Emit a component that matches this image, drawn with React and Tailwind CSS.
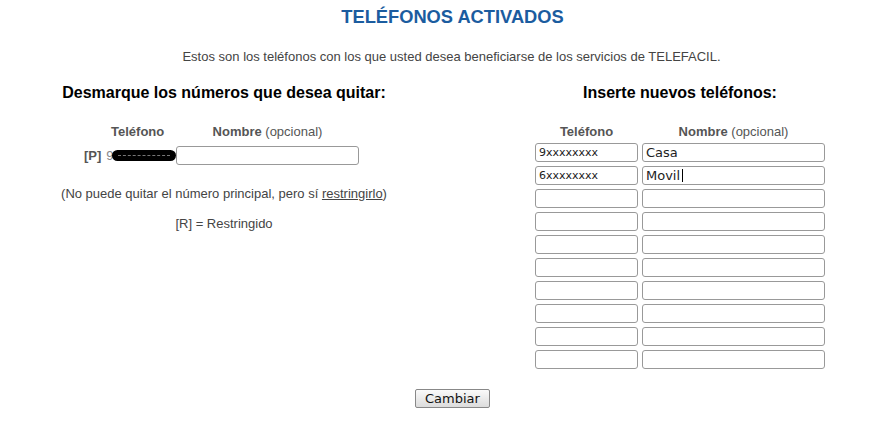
import React from 'react';

const inputCls =
  "block h-[19px] border border-[#999] rounded-[3px] bg-white px-[3px] text-[#222] font-['DejaVu_Sans',sans-serif] outline-none";

const nuevos = [
  { tel: '9xxxxxxxx', nombre: 'Casa' },
  { tel: '6xxxxxxxx', nombre: 'Movil', caret: true },
  { tel: '', nombre: '' },
  { tel: '', nombre: '' },
  { tel: '', nombre: '' },
  { tel: '', nombre: '' },
  { tel: '', nombre: '' },
  { tel: '', nombre: '' },
  { tel: '', nombre: '' },
  { tel: '', nombre: '' },
];

const App = () => {
  return (
    <div className="w-[893px] h-[421px] bg-white text-[#444] font-['Liberation_Sans',Arial,sans-serif] overflow-hidden">
      {/* Titulo */}
      <h1 className="pt-[6px] pl-[12px] text-center text-[18.3px] leading-[22px] font-bold text-[#1b5c9f]">
        TELÉFONOS ACTIVADOS
      </h1>
      <p className="mt-[21px] pl-[10px] text-center text-[13px] leading-[15px]">
        Estos son los teléfonos con los que usted desea beneficiarse de los servicios de TELEFACIL.
      </p>

      <div className="flex mt-[19px]">
        {/* Columna izquierda */}
        <div className="w-[448px] flex flex-col items-center">
          <h2 className="text-[16px] leading-[19px] font-bold text-black">
            Desmarque los números que desea quitar:
          </h2>
          <div className="self-start ml-[84px] mt-[22px]">
            <div className="flex text-[13px] leading-[15px] text-[#555]">
              <div className="w-[92px] pl-[27px] font-bold">Teléfono</div>
              <div className="w-[183px] text-center">
                <span className="font-bold">Nombre</span> (opcional)
              </div>
            </div>
            <div className="flex items-center mt-[7px]">
              <div className="w-[92px] flex items-center text-[13px] text-[#555]">
                <span className="font-bold">[P]</span>
                <span className="ml-[5px] text-[#888]">9</span>
                <span className="ml-[-2px] w-[64px] h-[11px] rounded-full bg-black flex items-center px-[6px]">
                  <span className="w-full border-t border-dashed border-[#777]" />
                </span>
              </div>
              <input className={inputCls + " w-[183px] text-[13px]"} defaultValue="" />
            </div>
          </div>
          <p className="mt-[20px] text-[13px] leading-[15px]">
            (No puede quitar el número principal, pero sí <span className="underline">restringirlo</span>)
          </p>
          <p className="mt-[15px] text-[13px] leading-[15px]">[R] = Restringido</p>
        </div>

        {/* Columna derecha */}
        <div className="flex-1 flex flex-col items-center pl-[19px]">
          <h2 className="text-[16px] leading-[19px] font-bold text-black">Inserte nuevos teléfonos:</h2>
          <div className="mt-[22px]">
            <div className="flex gap-[4px] text-[13px] leading-[15px] text-[#555]">
              <div className="w-[103px] text-center font-bold">Teléfono</div>
              <div className="w-[183px] text-center">
                <span className="font-bold">Nombre</span> (opcional)
              </div>
            </div>
            <div className="mt-[4px] flex flex-col gap-[4px]">
              {nuevos.map((n, i) => (
                <div key={i} className="flex gap-[4px]">
                  <input className={inputCls + " w-[103px] text-[11px]"} defaultValue={n.tel} />
                  <div className="relative">
                    <input className={inputCls + " w-[183px] text-[13px]"} defaultValue={n.nombre} />
                    {n.caret && <span className="absolute left-[40px] top-[3px] w-px h-[13px] bg-black" />}
                  </div>
                </div>
              ))}
            </div>
          </div>
        </div>
      </div>

      <div className="flex justify-center pl-[12px] mt-[20px]">
        <button className="w-[75px] h-[19px] border border-[#888] rounded-[2px] bg-gradient-to-b from-[#fafafa] to-[#dcdcdc] text-[13px] leading-[17px] text-[#111] font-['DejaVu_Sans',sans-serif]">
          Cambiar
        </button>
      </div>
    </div>
  );
};

export default App;
